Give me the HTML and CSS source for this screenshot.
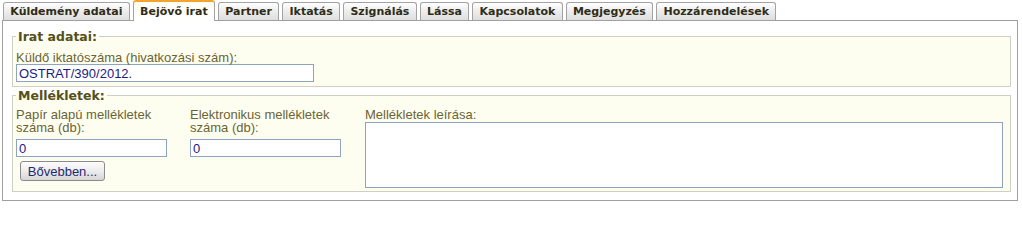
FILE: index.html
```html
<!DOCTYPE html>
<html lang="hu">
<head>
<meta charset="utf-8">
<title>Bejövő irat</title>
<link rel="stylesheet" href="styles.css">
</head>
<body>
<div class="tabs">
  <div class="tab">Küldemény adatai</div>
  <div class="tab active">Bejövő irat</div>
  <div class="tab">Partner</div>
  <div class="tab">Iktatás</div>
  <div class="tab">Szignálás</div>
  <div class="tab">Lássa</div>
  <div class="tab">Kapcsolatok</div>
  <div class="tab">Megjegyzés</div>
  <div class="tab">Hozzárendelések</div>
</div>
<div class="panel">
  <fieldset class="group group-irat">
    <legend class="legend">Irat adatai:</legend>
    <label class="lbl">Küldő iktatószáma (hivatkozási szám):</label>
    <input class="field field-wide" type="text" value="OSTRAT/390/2012.">
  </fieldset>
  <fieldset class="group group-mell">
    <legend class="legend">Mellékletek:</legend>
    <div class="cols">
      <div class="col col-papir">
        <label class="lbl lbl-two">Papír alapú mellékletek<br>száma (db):</label>
        <input class="field field-num" type="text" value="0">
        <button class="btn" type="button">Bővebben...</button>
      </div>
      <div class="col col-elek">
        <label class="lbl lbl-two">Elektronikus mellékletek<br>száma (db):</label>
        <input class="field field-num" type="text" value="0">
      </div>
      <div class="col col-leiras">
        <label class="lbl lbl-one">Mellékletek leírása:</label>
        <textarea class="area"></textarea>
      </div>
    </div>
  </fieldset>
</div>
</body>
</html>
```
FILE: styles.css
```css
html, body {
  margin: 0;
  padding: 0;
  background: #ffffff;
  width: 1022px;
  height: 202px;
  overflow: hidden;
}

body {
  font-family: "Liberation Sans", Arial, sans-serif;
  font-size: 13px;
}

.tabs {
  display: flex;
  align-items: flex-end;
  height: 20px;
  padding-left: 3px;
  gap: 3px;
}

.tab {
  box-sizing: border-box;
  height: 18px;
  padding: 1px 6.3px 0;
  border: 1px solid #a3a3a3;
  border-bottom: none;
  border-radius: 3px 3px 0 0;
  background: linear-gradient(#ffffff, #f0f0f0 40%, #dedede);
  font-family: "DejaVu Sans", Verdana, sans-serif;
  font-weight: bold;
  font-size: 11px;
  line-height: 15px;
  color: #2f2d18;
  white-space: nowrap;
}

.tab.active {
  position: relative;
  z-index: 1;
  height: 21px;
  margin-bottom: -1px;
  padding-top: 2px;
  border-top: 2px solid #f2a52e;
  background: linear-gradient(#fffdf4, #ffffff);
}

.panel {
  box-sizing: border-box;
  margin: 0 4px 0 2px;
  height: 181px;
  border: 1px solid #a0a0a0;
  background: #ffffff;
  padding: 8px 6px 0 9px;
}

.group {
  margin: 0;
  border: 1px solid #cfcfc4;
  background: #fefef0;
  padding: 7px 7px 4px 3px;
  min-width: 0;
}

.group-mell {
  margin-top: 1px;
  padding-top: 5px;
  padding-bottom: 3px;
}

.legend {
  padding: 0 2px;
  font-family: "DejaVu Sans", Verdana, sans-serif;
  font-weight: bold;
  font-size: 12.5px;
  line-height: 15px;
  color: #55501a;
}

.lbl {
  display: block;
  line-height: 13px;
  color: #6a6434;
}

.lbl-two {
  margin-bottom: 5px;
}

.lbl-one {
  margin-bottom: 1px;
}

.field {
  display: block;
  box-sizing: border-box;
  height: 18px;
  margin: 0;
  padding: 0 2px;
  border: 1px solid #8ea3bd;
  background: #ffffff;
  font-family: "Liberation Sans", Arial, sans-serif;
  font-size: 13px;
  color: #1b1b84;
  outline: none;
}

.field-wide {
  width: 298px;
}

.field-num {
  width: 151px;
}

.cols {
  display: flex;
}

.col-papir {
  width: 174px;
}

.col-elek {
  width: 175px;
}

.col-leiras {
  flex: 1;
}

.btn {
  display: block;
  box-sizing: border-box;
  margin: 4px 0 0 4px;
  width: 85px;
  height: 20px;
  padding: 0;
  border: 1px solid #8b8b8b;
  border-radius: 3px;
  background: linear-gradient(#fdfdfd, #ececec 50%, #d6d6d6);
  font-family: "Liberation Sans", Arial, sans-serif;
  font-size: 13px;
  color: #1f2a70;
}

.area {
  display: block;
  box-sizing: border-box;
  width: 100%;
  height: 66px;
  margin: 0;
  border: 1px solid #8ea3bd;
  background: #ffffff;
  resize: none;
  font-family: "Liberation Sans", Arial, sans-serif;
  font-size: 13px;
}
```
